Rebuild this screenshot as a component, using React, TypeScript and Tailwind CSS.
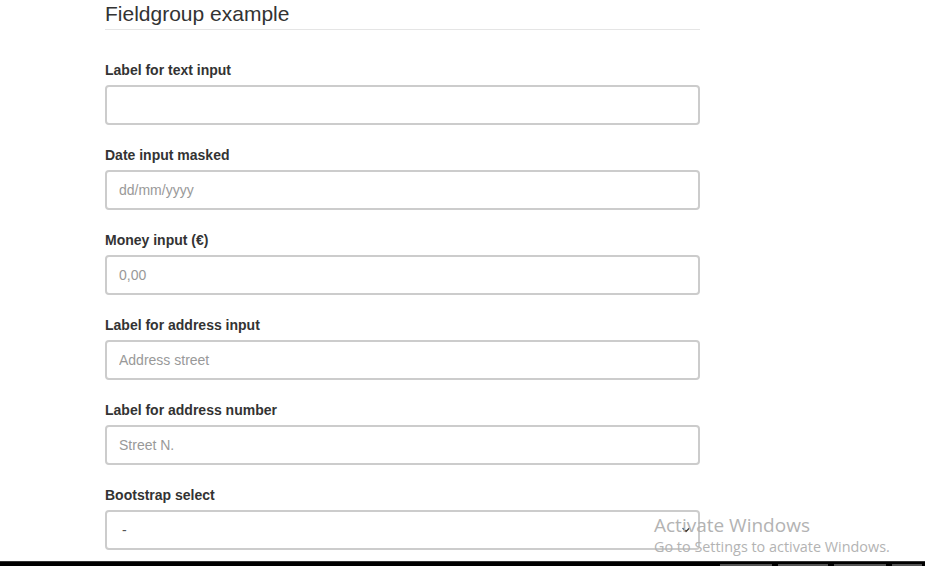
import { ChevronDown } from "lucide-react"

const FIELDS = [
  { label: "Label for text input", placeholder: "" },
  { label: "Date input masked", placeholder: "dd/mm/yyyy" },
  { label: "Money input (€)", placeholder: "0,00" },
  { label: "Label for address input", placeholder: "Address street" },
  { label: "Label for address number", placeholder: "Street N." },
]

export default function App() {
  return (
    <div className="relative h-[566px] w-[925px] overflow-hidden bg-white font-['Liberation_Sans',Arial,sans-serif] text-[#333]">
      <div className="w-[595px] ml-[105px]">
        {/* Legend */}
        <div className="border-b border-[#e5e5e5] pb-[6px] pt-[4px] text-[21px] leading-[19px] text-[#333]">
          Fieldgroup example
        </div>

        <div className="pt-[33px]">
          {FIELDS.map((f) => (
            <div key={f.label} className="mb-[23px]">
              <label className="block text-[14px] font-bold leading-[15px] mb-[7px]">{f.label}</label>
              <input
                type="text"
                placeholder={f.placeholder}
                className="block h-[40px] w-full rounded-[4px] border-2 border-[#ccc] px-[12px] text-[14px] text-[#555] placeholder:text-[#999] outline-none"
              />
            </div>
          ))}

          <div>
            <label className="block text-[14px] font-bold leading-[15px] mb-[7px]">Bootstrap select</label>
            <div className="flex h-[40px] w-full items-center justify-between rounded-[4px] border-2 border-[#ccc] pl-[15px] pr-[6px] text-[14px] text-[#555]">
              <span>-</span>
              <ChevronDown className="h-[12px] w-[12px] text-[#333]" strokeWidth={2.5} />
            </div>
          </div>
        </div>
      </div>

      {/* Windows activation watermark */}
      <div className="absolute left-[654px] top-[513px] font-['Open_Sans',sans-serif] text-[#b3b3b3]">
        <div className="text-[19px] leading-[24px]">Activate Windows</div>
        <div className="text-[14.4px] leading-[20px]">Go to Settings to activate Windows.</div>
      </div>

      {/* Taskbar */}
      <div className="absolute bottom-0 left-0 flex h-[5px] w-full items-end gap-[6px] border-t border-[#333] bg-black pl-[720px]">
        <div className="h-[2px] w-[52px] bg-[#555]" />
        <div className="h-[2px] w-[50px] bg-[#555]" />
        <div className="h-[2px] w-[52px] bg-[#555]" />
        <div className="h-[2px] w-[30px] bg-[#555]" />
      </div>
    </div>
  )
}
